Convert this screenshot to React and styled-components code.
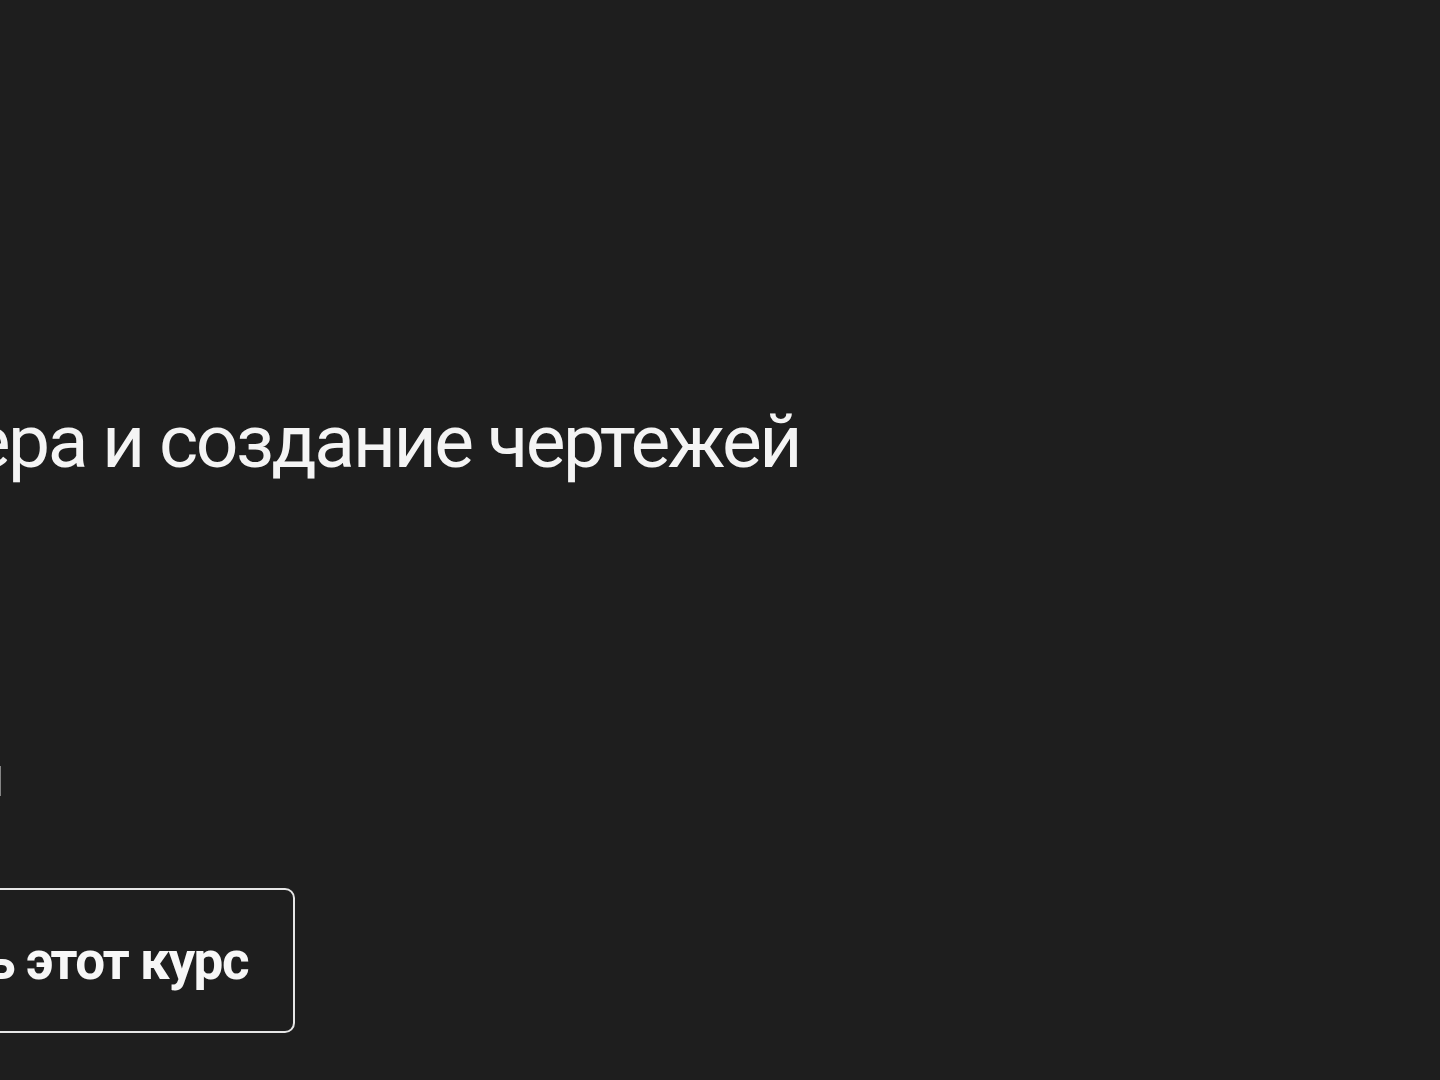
import React from 'react';
import styled, { createGlobalStyle } from 'styled-components';

const GlobalStyle = createGlobalStyle`
  html, body {
    margin: 0;
    padding: 0;
    background: #1e1e1e;
  }
  body {
    font-family: Roboto, "Noto Sans", "Liberation Sans", sans-serif;
    color: #f2f2f2;
  }
`;

const Page = styled.div`
  width: 1440px;
  height: 1080px;
  overflow: hidden;
  background: #1e1e1e;
  display: flex;
  flex-direction: column;
`;

// each row ends at its own right edge; the rest is cut off on the left
const Row = styled.div`
  display: flex;
  justify-content: flex-end;
  width: ${(p) => p.$width}px;
  margin-top: ${(p) => p.$top}px;
`;

const Title = styled.h1`
  flex-shrink: 0;
  margin: 0;
  font-size: 75px;
  font-weight: 400;
  line-height: 100px;
  letter-spacing: -2.5px;
  white-space: nowrap;
  color: #f4f4f4;
`;

const Meta = styled.p`
  flex-shrink: 0;
  margin: 0;
  font-size: 57px;
  font-weight: 500;
  line-height: 68px;
  white-space: nowrap;
  color: #f0f0f0;
`;

const BuyButton = styled.a`
  flex-shrink: 0;
  display: flex;
  align-items: center;
  height: 145px;
  box-sizing: border-box;
  padding: 0 45px 0 60px;
  border: 2px solid #e6e6e6;
  border-radius: 10px;
  font-size: 53px;
  font-weight: 700;
  letter-spacing: -1.5px;
  white-space: nowrap;
  color: #f7f7f7;
  text-decoration: none;
  cursor: pointer;
`;

const App = () => {
  return (
    <>
      <GlobalStyle />
      <Page>
        <Row $width={800} $top={391}>
          <Title>Моделирование корпуса принтера и создание чертежей</Title>
        </Row>
        <Row $width={4} $top={252}>
          <Meta>12 модулей · 48 уроков · сертификат по окончании</Meta>
        </Row>
        <Row $width={295} $top={77}>
          <BuyButton href="#">Купить этот курс</BuyButton>
        </Row>
      </Page>
    </>
  );
};

export default App;
